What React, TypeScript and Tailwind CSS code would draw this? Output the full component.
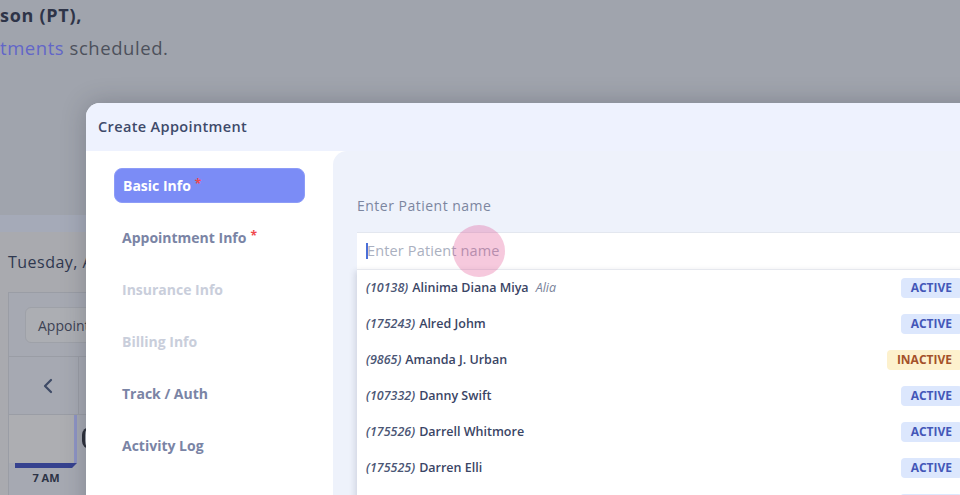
import React from "react";

const font = { fontFamily: '"Open Sans", "Noto Sans", sans-serif' };

type Row = { id: string; name: string; alias?: string; active: boolean };
const rows: Row[] = [
  { id: "10138", name: "Alinima Diana Miya", alias: "Alia", active: true },
  { id: "175243", name: "Alred Johm", active: true },
  { id: "9865", name: "Amanda J. Urban", active: false },
  { id: "107332", name: "Danny Swift", active: true },
  { id: "175526", name: "Darrell Whitmore", active: true },
  { id: "175525", name: "Darren Elli", active: true },
];

function Background() {
  return (
    <div className="flex flex-col w-[960px] h-[495px]">
      <div className="h-[215px] bg-[#a0a4ad] flex flex-col">
        <div className="pt-[3px] text-[18px] font-bold tracking-[0.04em] text-[#2e3448] leading-[24px]">son (PT),</div>
        <div className="mt-[9px] text-[18.5px] leading-[24px] tracking-[0.03em] text-[#4d515c]">
          <span className="text-[#6266c8] font-medium">tments</span> scheduled.
        </div>
      </div>
      <div className="h-[17px] bg-[#a5aab8]" />
      <div className="flex-1 bg-[#a9aaaf] flex flex-col pl-2">
        <div className="h-[60px] flex items-center text-[16px] font-medium tracking-[0.03em] text-[#2f3850]">Tuesday, A</div>
        <div className="border-l border-t border-[#9a9da5] bg-[#a6a9b2] flex-1 flex flex-col">
          <div className="h-[64px] border-b border-[#9a9da5] pl-4 pt-[14px]">
            <div className="h-[36px] w-[120px] rounded-md border border-[#9ea1a8] bg-[#acaeb3] flex items-center pl-3 text-[14px] text-[#3c4253]">
              Appointments
            </div>
          </div>
          <div className="h-[58px] flex border-b border-[#9a9da5]">
            <div className="w-[70px] flex items-center pl-[33px] border-r border-[#9a9da5] text-[#3e4a66]">
              <svg width="12" height="16" viewBox="0 0 12 16" fill="none">
                <path d="M9 2 L3 8 L9 14" stroke="currentColor" strokeWidth="2.2" strokeLinecap="round" strokeLinejoin="round" />
              </svg>
            </div>
          </div>
          <div className="h-[48px] flex">
            <div className="w-[68px] bg-[#adaeb2] border-r-[3px] border-[#8e94c4]" />
            <div className="ml-[5px] mt-[12px] w-[8px] h-[22px] rounded-l-full border-l-[3px] border-[#2c2f3a]" />
          </div>
          <div className="flex flex-col pl-[6px]">
            <div className="h-[5px] w-[62px] bg-[#36428f] [clip-path:polygon(0_0,100%_0,92%_100%,0_100%)]" />
            <div className="w-[62px] text-center text-[11px] font-bold text-[#2c3345] mt-[2px]">7 AM</div>
          </div>
        </div>
      </div>
    </div>
  );
}

function NavItem({ label, state, req }: { label: string; state: "active" | "normal" | "disabled"; req?: boolean }) {
  const cls =
    state === "active"
      ? "bg-[#7b8cf6] border border-[#8d9cf7] text-white"
      : state === "normal"
      ? "text-[#7a84a5]"
      : "text-[#c9cedb]";
  return (
    <div className={`h-[35px] rounded-lg flex items-center px-2 text-[14px] font-bold ${cls}`}>
      {label}
      {req && <span className="text-[#f0484d] ml-1 text-[12px] -mt-[4px]">*</span>}
    </div>
  );
}

function Badge({ active }: { active: boolean }) {
  return active ? (
    <span className="h-[20px] px-[10px] rounded bg-[#dce7fd] text-[#4457b8] text-[12px] font-bold flex items-center">ACTIVE</span>
  ) : (
    <span className="h-[20px] px-[10px] rounded bg-[#fdf1cd] text-[#a4512a] text-[12px] font-bold flex items-center">INACTIVE</span>
  );
}

export default function App() {
  return (
    <div className="relative w-[960px] h-[495px] overflow-hidden" style={font}>
      <Background />
      <div className="absolute left-[86px] top-[103px] w-[920px] h-[420px] rounded-tl-[14px] bg-white shadow-[0_0_24px_rgba(30,35,50,0.25)] flex flex-col overflow-hidden">
        <div className="h-[48px] bg-[#eef2fe] flex items-center pl-3 text-[14.5px] tracking-[0.025em] font-semibold text-[#3e4a6a]">
          Create Appointment
        </div>
        <div className="flex flex-1">
          <div className="w-[247px] bg-white px-[28px] pt-[17px] flex flex-col gap-[17px]">
            <NavItem label="Basic Info" state="active" req />
            <NavItem label="Appointment Info" state="normal" req />
            <NavItem label="Insurance Info" state="disabled" />
            <NavItem label="Billing Info" state="disabled" />
            <NavItem label="Track / Auth" state="normal" />
            <NavItem label="Activity Log" state="normal" />
          </div>
          <div className="flex-1 bg-[#eef2fb] rounded-tl-[14px] pl-[24px] pt-[45px]">
            <div className="text-[14px] font-medium tracking-[0.035em] text-[#7c86a0] leading-[20px]">Enter Patient name</div>
            <div className="mt-[16px] w-[613px] relative">
              <div className="h-[37px] bg-white border-t border-[#e3e7ef] flex items-center pl-[9px] text-[14.5px] tracking-[0.01em] text-[#aab0c0]">
                <span className="w-[2px] h-[16px] bg-[#4a6fd8] mr-[-1px]" />
                Enter Patient name
              </div>
              <div className="absolute left-[96px] top-[-7px] w-[52px] h-[52px] rounded-full bg-[rgba(219,39,119,0.25)]" />
              <div className="bg-white border-t border-[#e6e8ee] shadow-[-2px_2px_6px_rgba(40,50,80,0.15)] flex flex-col">
                {rows.map((r) => (
                  <div key={r.id} className="h-[36px] flex items-center pl-[9px] pr-[8px]">
                    <span className="text-[12.5px] italic font-semibold text-[#4b5675]">({r.id})</span>
                    <span className="text-[12.5px] font-semibold text-[#3a4565] ml-[4px]">{r.name}</span>
                    {r.alias && <span className="text-[12.5px] italic text-[#7a839a] ml-[7px]">{r.alias}</span>}
                    <span className="flex-1" />
                    <Badge active={r.active} />
                  </div>
                ))}
                <div className="h-[36px] flex items-start pt-[8px] justify-end pr-[8px]">
                  <span className="h-[20px] w-[62px] rounded bg-[#dce7fd]" />
                </div>
              </div>
            </div>
          </div>
        </div>
      </div>
    </div>
  );
}
